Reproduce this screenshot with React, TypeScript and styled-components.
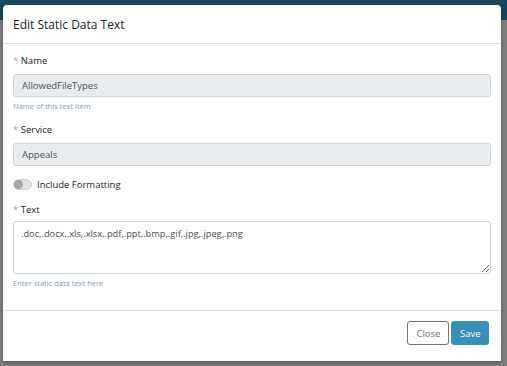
import styled, { createGlobalStyle } from 'styled-components';

const GlobalStyle = createGlobalStyle`
   html, body {
      margin: 0;
      padding: 0;
   }
   body {
      font-family: 'Open Sans', 'Noto Sans', sans-serif;
      background: #808080;
   }
`;

const App = () => {
   return (
      <>
         <GlobalStyle />
         <Page>
            <TopBar />
            <Backdrop>
               <Modal>
                  <Header>
                     <Title>Edit Static Data Text</Title>
                  </Header>
                  <Body>
                     <Field space={13}>
                        <Label>
                           <Req>*</Req> Name
                        </Label>
                        <Input readOnly value="AllowedFileTypes" />
                        <Hint>Name of this text item</Hint>
                     </Field>
                     <Field space={12}>
                        <Label>
                           <Req>*</Req> Service
                        </Label>
                        <Input readOnly value="Appeals" />
                     </Field>
                     <SwitchRow>
                        <Switch>
                           <Knob />
                        </Switch>
                        <SwitchText>Include Formatting</SwitchText>
                     </SwitchRow>
                     <Field space={0}>
                        <Label tight>
                           <Req>*</Req> Text
                        </Label>
                        <TextArea defaultValue=".doc,.docx,.xls,.xlsx,.pdf,.ppt,.bmp,.gif,.jpg,.jpeg,.png" />
                        <Hint>Enter static data text here</Hint>
                     </Field>
                  </Body>
                  <Footer>
                     <Button>Close</Button>
                     <Button primary>Save</Button>
                  </Footer>
               </Modal>
            </Backdrop>
         </Page>
      </>
   );
};
export default App;

const Page = styled.div`
   width: 507px;
   height: 366px;
   position: relative;
   overflow: hidden;
   background: #7f7f7f;
`;
const TopBar = styled.div`
   height: 20px;
   background: #1b4659;
`;
const Backdrop = styled.div`
   position: absolute;
   inset: 0;
   padding: 5px 6px 0 3px;
`;
const Modal = styled.div`
   background: #fff;
   border-radius: 4px 4px 0 0;
   height: 356px;
   box-sizing: border-box;
   display: flex;
   flex-direction: column;
   box-shadow: 0 2px 4px rgba(0, 0, 0, 0.3);
`;
const Header = styled.div`
   height: 38px;
   display: flex;
   align-items: center;
   padding: 0 10px;
   border-bottom: 1px solid #dee2e6;
`;
const Title = styled.h5`
   margin: 0;
   font-size: 12px;
   font-weight: 400;
   color: #212529;
`;
const Body = styled.div`
   padding: 11px 10px 0;
   height: 267px;
   box-sizing: border-box;
   display: flex;
   flex-direction: column;
   border-bottom: 1px solid #dee2e6;
`;
const Field = styled.div<{ space: number }>`
   display: flex;
   flex-direction: column;
   margin-bottom: ${p => p.space}px;
`;
const Label = styled.label<{ tight?: boolean }>`
   font-size: 9.5px;
   line-height: 12px;
   color: #212529;
   margin-bottom: ${p => (p.tight ? 5 : 7)}px;
`;
const Req = styled.span`
   color: #e68a94;
`;
const Input = styled.input`
   height: 23px;
   box-sizing: border-box;
   border: 1px solid #ced4da;
   border-radius: 3px;
   background: #e9ecef;
   padding: 0 8px;
   font-family: inherit;
   font-size: 9.5px;
   color: #495057;
   outline: none;
`;
const Hint = styled.small`
   font-size: 7.5px;
   line-height: 10px;
   color: #7f9cb9;
   margin-top: 4px;
`;
const SwitchRow = styled.div`
   display: flex;
   align-items: center;
   gap: 5px;
   height: 12px;
   margin-bottom: 14px;
`;
const Switch = styled.div`
   width: 17px;
   height: 9px;
   border-radius: 6px;
   background: #e2e2e2;
   border: 1px solid #cfcfcf;
   position: relative;
`;
const Knob = styled.div`
   position: absolute;
   left: 0;
   top: 0;
   width: 9px;
   height: 9px;
   border-radius: 50%;
   background: #a6a6a6;
`;
const SwitchText = styled.span`
   font-size: 9.5px;
   color: #212529;
`;
const TextArea = styled.textarea`
   height: 53px;
   box-sizing: border-box;
   border: 1px solid #ced4da;
   border-radius: 3px;
   padding: 5px 7px;
   font-family: inherit;
   font-size: 9.25px;
   color: #495057;
   resize: vertical;
   outline: none;
`;
const Footer = styled.div`
   display: flex;
   justify-content: flex-end;
   gap: 2px;
   padding: 10px 12px 0;
`;
const Button = styled.button<{ primary?: boolean }>`
   height: 24px;
   padding: 0 ${p => (p.primary ? 7.5 : 8)}px;
   border-radius: 3px;
   font-family: inherit;
   font-size: 9.5px;
   border: 1px solid ${p => (p.primary ? '#3a8fb7' : '#6c757d')};
   background: ${p => (p.primary ? '#3a8fb7' : '#fff')};
   color: ${p => (p.primary ? '#fff' : '#6c757d')};
`;
